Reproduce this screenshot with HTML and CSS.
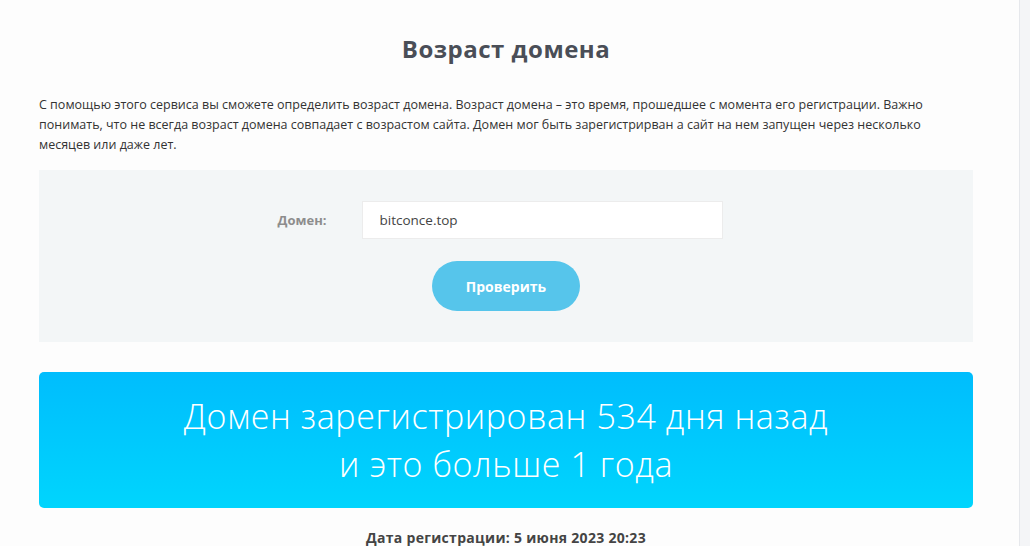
FILE: index.html
```html
<!DOCTYPE html>
<html lang="ru">
<head>
  <meta charset="UTF-8" />
  <title>Возраст домена</title>
  <link rel="stylesheet" href="styles.css">
</head>
<body>
  <div class="page">
    <main class="content">
      <h1>Возраст домена</h1>
      <p class="intro">С помощью этого сервиса вы сможете определить возраст домена. Возраст домена – это время, прошедшее с момента его регистрации. Важно понимать, что не всегда возраст домена совпадает с возрастом сайта. Домен мог быть зарегистрирван а сайт на нем запущен через несколько месяцев или даже лет.</p>

      <form class="check-form">
        <div class="row">
          <label for="domain">Домен:</label>
          <input type="text" id="domain" value="bitconce.top" />
        </div>
        <button type="submit">Проверить</button>
      </form>

      <div class="result">
        Домен зарегистрирован 534 дня назад<br>
        и это больше 1 года
      </div>

      <p class="reg-date">Дата регистрации: 5 июня 2023 20:23</p>
    </main>
    <div class="scroll"></div>
  </div>
</body>
</html>
```

FILE: styles.css
```css
html, body {
  margin: 0;
  height: 100%;
}
body {
  font-family: 'Open Sans', 'DejaVu Sans', sans-serif;
  background: #fdfdfd;
  color: #333;
  overflow: hidden;
}
.page {
  display: flex;
  height: 100%;
}
.content {
  width: 934px;
  margin-left: 39px;
  flex: none;
}
.scroll {
  margin-left: auto;
  width: 10px;
  background: #f4f5f7;
  border-left: 1px solid #e6e8ec;
}
h1 {
  margin: 34px 0 0;
  text-align: center;
  font-size: 24px;
  font-weight: bold;
  letter-spacing: 0.5px;
  color: #4a4e57;
  line-height: 30px;
}
.intro {
  margin: 31px 0 0;
  font-size: 12.5px;
  line-height: 20px;
  color: #333;
}
.check-form {
  margin-top: 15px;
  background: #f3f6f7;
  height: 172px;
  box-sizing: border-box;
  padding-top: 31px;
  display: flex;
  flex-direction: column;
  align-items: center;
}
.row {
  display: flex;
  align-items: center;
  margin-right: 12px;
}
label {
  width: 84px;
  font-size: 13px;
  font-weight: bold;
  color: #8d8d8d;
}
input {
  width: 361px;
  height: 38px;
  box-sizing: border-box;
  border: 1px solid #ececec;
  background: #fff;
  padding: 0 17px;
  font-family: inherit;
  font-size: 13.5px;
  color: #444;
  outline: none;
}
button {
  margin-top: 22px;
  width: 148px;
  height: 50px;
  border: none;
  border-radius: 25px;
  background: #56c5eb;
  color: #fff;
  font-family: inherit;
  font-size: 14px;
  font-weight: bold;
  cursor: pointer;
}
.result {
  margin-top: 30px;
  height: 136px;
  box-sizing: border-box;
  padding-top: 20px;
  border-radius: 5px;
  background: linear-gradient(#00bdfd, #00d5fd);
  color: #fff;
  text-align: center;
  font-size: 34px;
  font-weight: 300;
  letter-spacing: 0.6px;
  line-height: 48px;
}
.reg-date {
  margin: 22px 0 0;
  text-align: center;
  font-size: 14px;
  font-weight: bold;
  letter-spacing: 0.3px;
  line-height: 16px;
  color: #444;
}
```
